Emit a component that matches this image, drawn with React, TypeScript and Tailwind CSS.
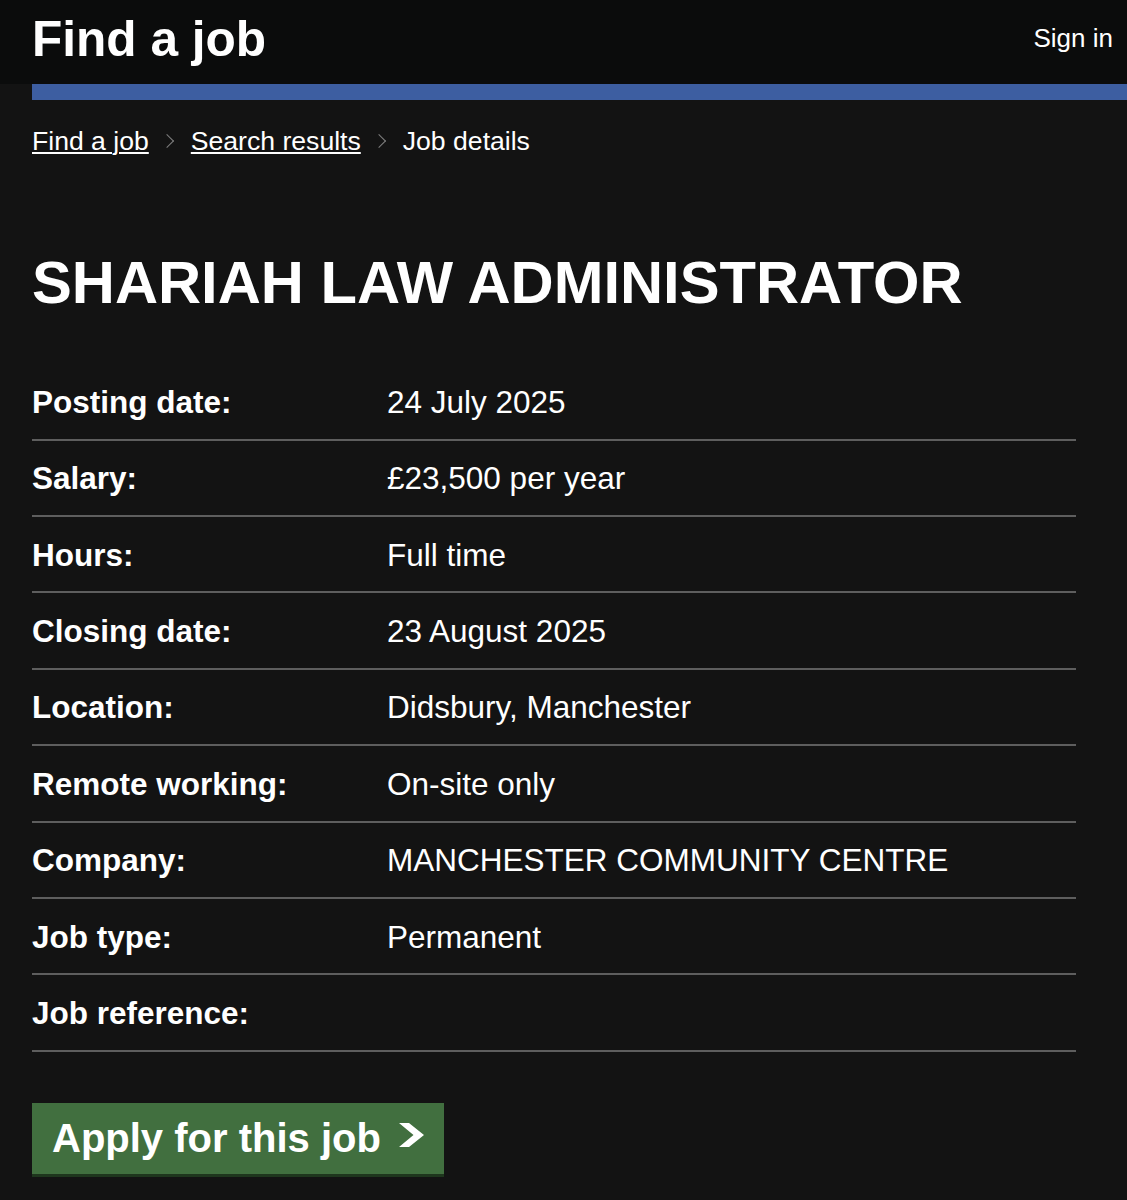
import React from 'react';

const details: [string, string][] = [
  ['Posting date:', '24 July 2025'],
  ['Salary:', '£23,500 per year'],
  ['Hours:', 'Full time'],
  ['Closing date:', '23 August 2025'],
  ['Location:', 'Didsbury, Manchester'],
  ['Remote working:', 'On-site only'],
  ['Company:', 'MANCHESTER COMMUNITY CENTRE'],
  ['Job type:', 'Permanent'],
  ['Job reference:', ''],
];

const Crumb = () => (
  <span className="ml-[13px] mr-[19px] inline-block h-[10px] w-[10px] rotate-45 border-t border-r border-[#808080]" />
);

const App = () => {
  return (
    <div className="min-h-screen bg-[#131313] text-white" style={{ fontFamily: '"Liberation Sans", Arial, sans-serif' }}>
      <header className="flex h-[84px] items-start justify-between bg-[#0b0c0c] pl-[32px] pr-[14px]">
        <a href="#" className="mt-[15px] text-[49.6px] font-bold leading-none text-white">
          Find a job
        </a>
        <a href="#" className="mt-[25px] text-[26px] leading-none text-white">
          Sign in
        </a>
      </header>

      <div className="pl-[32px]">
        <div className="h-[16px] bg-[#3d5ea1]" />
      </div>

      <main className="pl-[32px] pr-[51px] pb-[24px]">
        <nav className="mt-[28px] flex items-center text-[26.6px] leading-none">
          <a href="#" className="underline decoration-2 underline-offset-[2px]">
            Find a job
          </a>
          <Crumb />
          <a href="#" className="underline decoration-2 underline-offset-[2px]">
            Search results
          </a>
          <Crumb />
          <span>Job details</span>
        </nav>

        <h1 className="mt-[98px] text-[59.7px] font-bold leading-none">SHARIAH LAW ADMINISTRATOR</h1>

        <dl className="mt-[52px]">
          {details.map(([label, value]) => (
            <div
              key={label}
              className="grid grid-cols-[355px_1fr] border-b-2 border-[#5e5e5e] pt-[17.5px] pb-[16.9px] text-[31.5px] leading-[40px]"
            >
              <dt className="font-bold">{label}</dt>
              <dd>{value}</dd>
            </div>
          ))}
        </dl>

        <button className="mt-[51px] flex h-[71px] items-center gap-[18px] bg-[#416f3f] pl-[20px] pr-[19px] text-[40px] font-bold leading-none text-white shadow-[0_3px_0_#1e361d]">
          <span>Apply for this job</span>
          <svg width="26" height="24" viewBox="0 0 26 24" className="mt-[-6px]">
            <polygon points="0,0 10,0 25,12 10,24 0,24 14.5,12" fill="#ffffff" />
          </svg>
        </button>
      </main>
    </div>
  );
};

export default App;
